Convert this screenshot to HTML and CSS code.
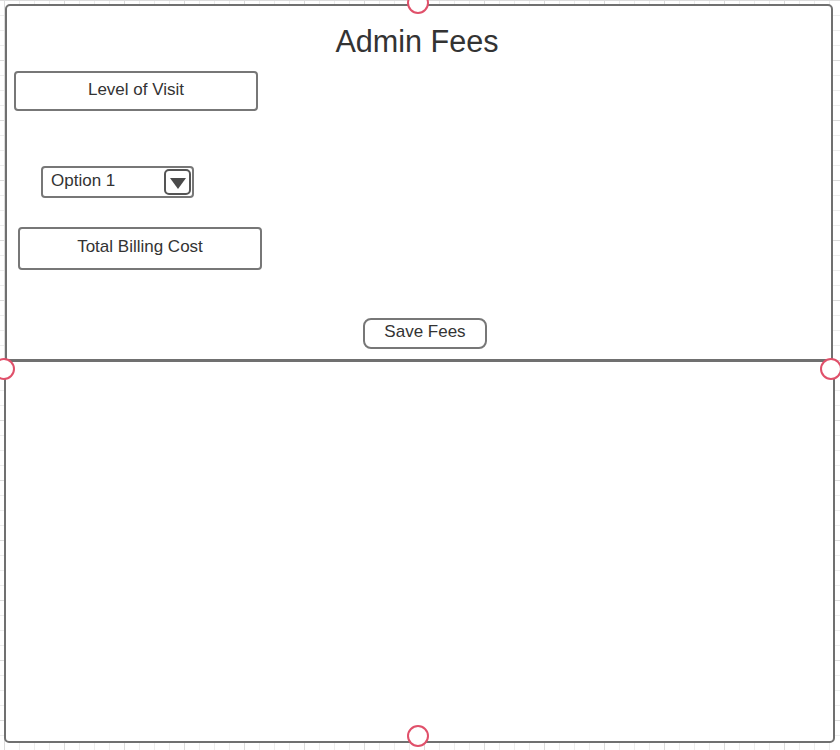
FILE: index.html
```html
<!DOCTYPE html>
<html>
<head>
<meta charset="utf-8">
<title>Admin Fees</title>
<link rel="stylesheet" href="styles.css">
</head>
<body>
<div class="canvas">
  <section class="card card-top">
    <h1 class="title">Admin Fees</h1>
    <div class="box box-level">Level of Visit</div>
    <div class="select">
      <span class="select-label">Option 1</span>
      <span class="select-btn"><span class="tri"></span></span>
    </div>
    <div class="box box-total">Total Billing Cost</div>
    <div class="btn-save">Save Fees</div>
  </section>
  <section class="card card-bottom"></section>
  <span class="handle h-top"></span>
  <span class="handle h-left"></span>
  <span class="handle h-right"></span>
  <span class="handle h-bottom"></span>
</div>
</body>
</html>
```

FILE: styles.css
```css
html, body {
  margin: 0;
  padding: 0;
  height: 100%;
}
body {
  font-family: "Liberation Sans", Arial, sans-serif;
  color: #333;
  background-color: #fff;
  background-image:
    linear-gradient(to right, #dcdcdc 1px, transparent 1px),
    linear-gradient(to bottom, #dcdcdc 1px, transparent 1px),
    linear-gradient(to right, #ededed 1px, transparent 1px),
    linear-gradient(to bottom, #ededed 1px, transparent 1px);
  background-size: 60px 60px, 60px 60px, 15px 15px, 15px 15px;
  background-position: 4px 0, 0 0, 4px 0, 0 0;
  overflow: hidden;
}
.canvas {
  position: relative;
  padding-top: 4px;
}
.card {
  box-sizing: border-box;
  background: #fff;
  border: 2px solid #707070;
}
.card-top {
  margin-left: 5px;
  width: 828px;
  height: 357px;
  border-radius: 5px 5px 0 0;
  display: flex;
  flex-direction: column;
  align-items: flex-start;
  padding: 0 5px;
}
.card-bottom {
  margin-left: 4px;
  margin-top: -1px;
  width: 831px;
  height: 383px;
  border-radius: 0 0 5px 5px;
}
.title {
  align-self: stretch;
  margin: 17px 0 0;
  font-size: 30.6px;
  font-weight: normal;
  line-height: 36px;
  text-align: center;
  color: #333;
  padding-right: 4px;
}
.box {
  box-sizing: border-box;
  border: 2px solid #777;
  border-radius: 4px;
  display: flex;
  align-items: center;
  justify-content: center;
  font-size: 17px;
}
.box-level {
  margin: 12px 0 0 2px;
  width: 244px;
  height: 40px;
  padding-bottom: 3px;
}
.select {
  box-sizing: border-box;
  margin: 55px 0 0 29px;
  width: 153px;
  height: 32px;
  border: 2px solid #777;
  border-radius: 4px;
  display: flex;
  align-items: center;
  justify-content: space-between;
  padding: 0 1px 0 8px;
  font-size: 17px;
}
.select-label {
  padding-bottom: 3px;
}
.select-btn {
  box-sizing: border-box;
  width: 27px;
  height: 26px;
  border: 2px solid #555;
  border-radius: 5px;
  display: flex;
  align-items: center;
  justify-content: center;
}
.tri {
  width: 0;
  height: 0;
  border-left: 8px solid transparent;
  border-right: 8px solid transparent;
  border-top: 11px solid #4a4a4a;
  margin-top: 2px;
}
.box-total {
  margin: 29px 0 0 6px;
  width: 244px;
  height: 43px;
  padding-bottom: 4px;
}
.btn-save {
  box-sizing: border-box;
  margin: 48px 0 0 351px;
  width: 124px;
  height: 31px;
  border: 2px solid #777;
  border-radius: 8px;
  display: flex;
  align-items: center;
  justify-content: center;
  font-size: 17px;
  padding-bottom: 4px;
}
.handle {
  position: absolute;
  box-sizing: border-box;
  width: 22px;
  height: 22px;
  border: 2px solid #e0506a;
  border-radius: 50%;
  background: #fff;
}
.h-top { left: 407px; top: -8px; }
.h-left { left: -7px; top: 358px; }
.h-right { left: 820px; top: 358px; }
.h-bottom { left: 407px; top: 725px; }
```
